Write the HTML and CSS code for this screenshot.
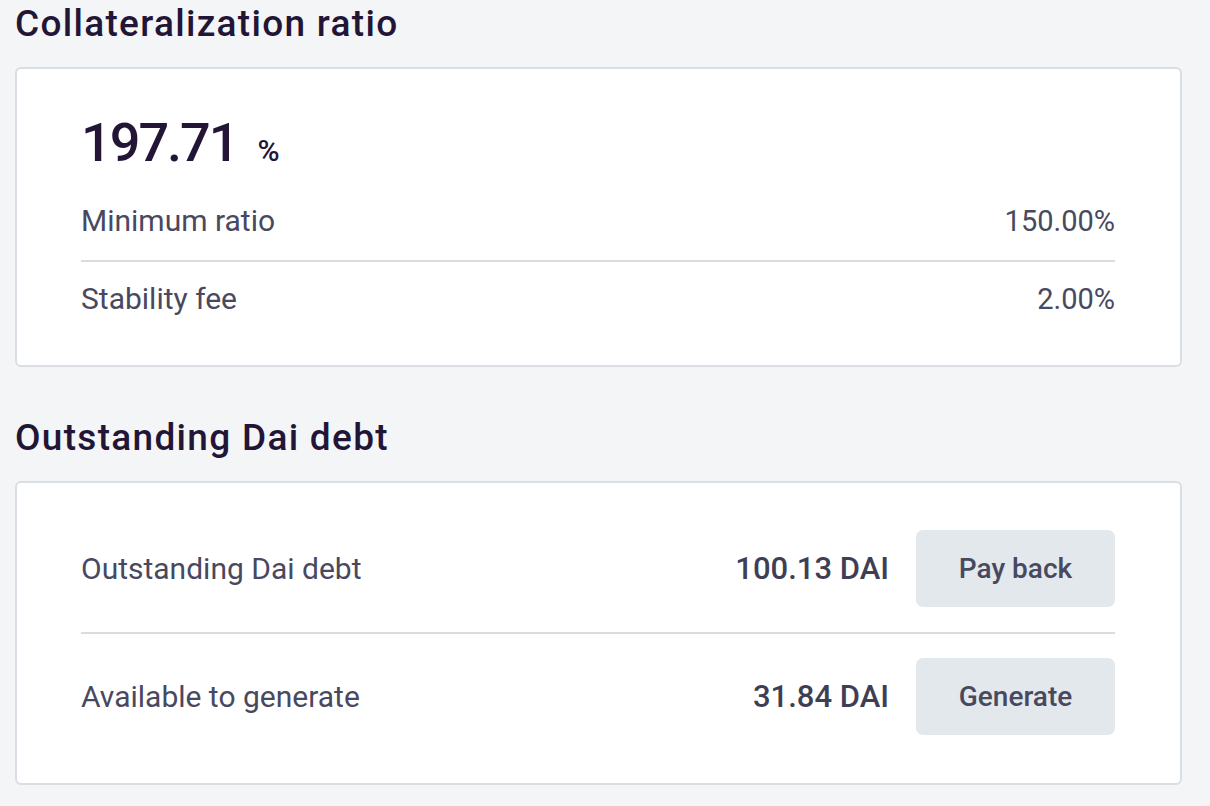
FILE: index.html
```html
<!DOCTYPE html>
<html>
<head>
<meta charset="utf-8">
<link rel="stylesheet" href="styles.css">
</head>
<body>
<main class="page">
  <h2 class="section-title">Collateralization ratio</h2>
  <section class="card card-ratio">
    <div class="big-value"><span class="big-number">197.71</span><span class="big-unit">%</span></div>
    <div class="info-row">
      <span class="label">Minimum ratio</span>
      <span class="value">150.00%</span>
    </div>
    <div class="info-row">
      <span class="label">Stability fee</span>
      <span class="value">2.00%</span>
    </div>
  </section>

  <h2 class="section-title second">Outstanding Dai debt</h2>
  <section class="card card-debt">
    <div class="action-row">
      <span class="label">Outstanding Dai debt</span>
      <div class="action-right">
        <span class="amount">100.13 DAI</span>
        <button class="btn">Pay back</button>
      </div>
    </div>
    <div class="action-row">
      <span class="label">Available to generate</span>
      <div class="action-right">
        <span class="amount">31.84 DAI</span>
        <button class="btn">Generate</button>
      </div>
    </div>
  </section>
</main>
</body>
</html>
```

FILE: styles.css
```css
html, body {
  margin: 0;
  padding: 0;
  background: #f4f5f7;
}

body {
  font-family: Roboto, "Noto Sans", sans-serif;
  color: #48495f;
}

.page {
  padding: 2px 28px 0 15px;
}

.section-title {
  margin: 0 0 21px 0;
  font-size: 37px;
  line-height: 44px;
  font-weight: 500;
  letter-spacing: 1.3px;
  color: #231536;
}

.section-title.second {
  margin-top: 49px;
}

.card {
  background: #ffffff;
  border: 2px solid #d9dee4;
  border-radius: 6px;
  box-sizing: border-box;
}

.card-ratio {
  padding: 42px 65px 27px 64px;
}

.big-value {
  display: flex;
  align-items: baseline;
  height: 64px;
  line-height: 64px;
  color: #231536;
  margin-bottom: 7px;
}

.big-number {
  font-size: 54px;
  font-weight: 500;
  letter-spacing: -2px;
}

.big-unit {
  font-size: 30px;
  line-height: 1;
  font-weight: 500;
  margin-left: 20px;
}

.info-row {
  display: flex;
  justify-content: space-between;
  align-items: center;
  line-height: 34px;
  padding: 22px 0;
}

.info-row + .info-row {
  border-top: 2px solid #dcdcdc;
  padding-top: 20px;
}

.label {
  font-size: 30px;
  color: #48495f;
}

.value {
  font-size: 29px;
  color: #48495f;
}

.card-debt {
  padding: 23px 65px 24px 64px;
}

.action-row {
  display: flex;
  justify-content: space-between;
  align-items: center;
  padding: 24px 0 25px 0;
}

.action-row + .action-row {
  border-top: 2px solid #dcdcdc;
  padding-bottom: 24px;
}

.action-right {
  display: flex;
  align-items: center;
  gap: 27px;
}

.amount {
  font-size: 31px;
  font-weight: 500;
  color: #3e3f55;
}

.btn {
  width: 199px;
  height: 77px;
  border: none;
  border-radius: 7px;
  background: #e2e8ec;
  font-family: Roboto, "Noto Sans", sans-serif;
  font-size: 28px;
  font-weight: 500;
  color: #48495f;
  padding: 0;
}
```
